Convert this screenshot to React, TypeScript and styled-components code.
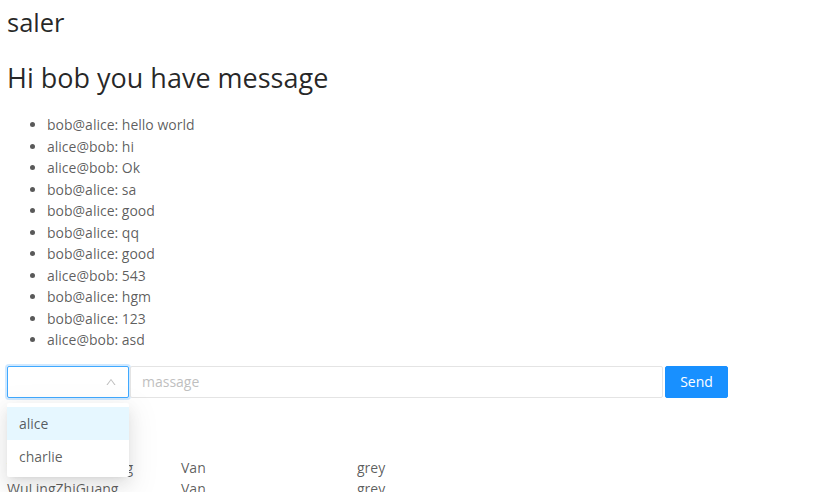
import React from "react";
import styled, { createGlobalStyle } from "styled-components";

const Global = createGlobalStyle`
  html, body { margin: 0; padding: 0; background: #fff; }
  body {
    font-family: "Open Sans", "Noto Sans", "Liberation Sans", sans-serif;
    color: rgba(0,0,0,0.65);
    font-size: 14px;
  }
`;

const Page = styled.div`
  padding: 0 7px;
  overflow: hidden;
  height: 492px;
`;

const Role = styled.h3`
  margin: 5px 0 0;
  font-size: 25.5px;
  line-height: 34px;
  font-weight: 400;
  color: rgba(0,0,0,0.85);
`;

const Greeting = styled.h2`
  margin: 20px 0 0;
  font-size: 27px;
  line-height: 38px;
  font-weight: 400;
  color: rgba(0,0,0,0.85);
`;

const Messages = styled.ul`
  margin: 17px 0 0;
  padding-left: 40px;
  list-style: disc;
`;

const Message = styled.li`
  font-size: 14px;
  line-height: 21.5px;
  color: rgba(0,0,0,0.65);
`;

const SendRow = styled.div`
  position: relative;
  display: flex;
  align-items: center;
  margin-top: 15px;
`;

const SelectBox = styled.div`
  box-sizing: border-box;
  width: 122px;
  height: 32px;
  border: 1px solid #40a9ff;
  border-radius: 2px;
  box-shadow: 0 0 0 2px rgba(24,144,255,0.2);
  display: flex;
  align-items: center;
  justify-content: flex-end;
  padding-right: 11px;
  background: #fff;
`;

const MessageInput = styled.input`
  box-sizing: border-box;
  width: 533px;
  height: 32px;
  margin-left: 1px;
  border: 1px solid #e4e4e4;
  border-radius: 2px;
  padding: 4px 11px;
  font-family: inherit;
  font-size: 14px;
  color: rgba(0,0,0,0.65);
  outline: none;
  &::placeholder { color: #bfbfbf; }
`;

const SendButton = styled.button`
  box-sizing: border-box;
  margin-left: 2px;
  height: 32px;
  width: 63px;
  border: 1px solid #1890ff;
  border-radius: 2px;
  background: #1890ff;
  color: #fff;
  font-family: inherit;
  font-size: 14px;
  cursor: pointer;
`;

const Dropdown = styled.div`
  position: absolute;
  left: 0;
  top: 37px;
  width: 122px;
  padding: 4px 0;
  background: #fff;
  border-radius: 2px;
  box-shadow: 0 3px 6px -4px rgba(0,0,0,0.12), 0 6px 16px 0 rgba(0,0,0,0.08), 0 9px 28px 8px rgba(0,0,0,0.05);
  z-index: 10;
`;

const Option = styled.div<{ $active?: boolean }>`
  height: 33px;
  line-height: 23px;
  padding: 5px 12px;
  box-sizing: border-box;
  font-size: 14px;
  color: rgba(0,0,0,0.65);
  background: ${(p) => (p.$active ? "#e6f7ff" : "#fff")};
`;

const Table = styled.table`
  margin-top: 59px;
  border-collapse: collapse;
  font-size: 14px;
  color: rgba(0,0,0,0.65);
`;

const Cell = styled.td<{ $w: number }>`
  width: ${(p) => p.$w}px;
  padding: 0;
  line-height: 21.5px;
  white-space: nowrap;
`;

const messages = [
  "bob@alice: hello world",
  "alice@bob: hi",
  "alice@bob: Ok",
  "bob@alice: sa",
  "bob@alice: good",
  "bob@alice: qq",
  "bob@alice: good",
  "alice@bob: 543",
  "bob@alice: hgm",
  "bob@alice: 123",
  "alice@bob: asd",
];

const rows = [
  ["WuLingHongGuang", "Van", "grey"],
  ["WuLingZhiGuang", "Van", "grey"],
];

export default function App() {
  return (
    <>
      <Global />
      <Page>
        <Role>saler</Role>
        <Greeting>Hi bob you have message</Greeting>
        <Messages>
          {messages.map((m, i) => (
            <Message key={i}>{m}</Message>
          ))}
        </Messages>
        <SendRow>
          <SelectBox>
            <svg width="12" height="12" viewBox="0 0 1024 1024" fill="#bfbfbf">
              <path d="M890.5 755.3L537.9 269.2c-12.8-17.6-39-17.6-51.7 0L133.5 755.3A8 8 0 00140 768h75c5.1 0 9.9-2.5 12.9-6.6L512 369.8l284.1 391.6c3 4.1 7.8 6.6 12.9 6.6h75c6.5 0 10.3-7.4 6.5-12.7z" />
            </svg>
          </SelectBox>
          <MessageInput placeholder="massage" />
          <SendButton>Send</SendButton>
          <Dropdown>
            <Option $active>alice</Option>
            <Option>charlie</Option>
          </Dropdown>
        </SendRow>
        <Table>
          <tbody>
            {rows.map((r, i) => (
              <tr key={i}>
                <Cell $w={174}>{r[0]}</Cell>
                <Cell $w={176}>{r[1]}</Cell>
                <Cell $w={100}>{r[2]}</Cell>
              </tr>
            ))}
          </tbody>
        </Table>
      </Page>
    </>
  );
}
